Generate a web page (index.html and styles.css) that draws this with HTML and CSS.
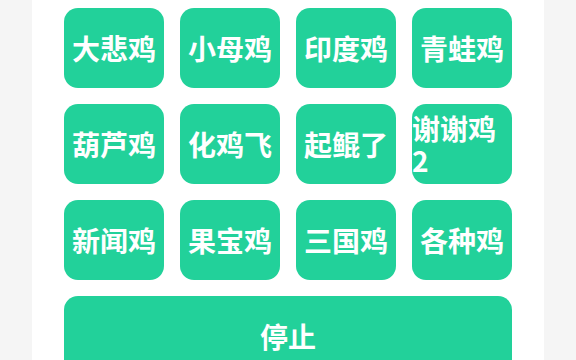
FILE: index.html
```html
<!DOCTYPE html>
<html lang="zh">
<head>
  <meta charset="UTF-8" />
  <meta name="viewport" content="width=device-width, initial-scale=1.0"/>
  <title>鸡</title>
  <link rel="stylesheet" href="styles.css">
</head>
<body>
  <div class="page">
    <div class="grid">
      <div class="btn">大悲鸡</div>
      <div class="btn">小母鸡</div>
      <div class="btn">印度鸡</div>
      <div class="btn">青蛙鸡</div>
      <div class="btn">葫芦鸡</div>
      <div class="btn">化鸡飞</div>
      <div class="btn">起鲲了</div>
      <div class="btn">谢谢鸡2</div>
      <div class="btn">新闻鸡</div>
      <div class="btn">果宝鸡</div>
      <div class="btn">三国鸡</div>
      <div class="btn">各种鸡</div>
    </div>
    <div class="btn stop">停止</div>
  </div>
</body>
</html>
```

FILE: styles.css
```css
* {
  box-sizing: border-box;
}
html, body {
  margin: 0;
  padding: 0;
  height: 100%;
  background: #f5f5f5;
  font-family: "Noto Sans CJK SC", "Noto Sans", sans-serif;
  overflow: hidden;
}
.page {
  width: 512px;
  margin: 0 auto;
  min-height: 100%;
  background: #fff;
  padding: 8px 32px;
}
.grid {
  display: grid;
  grid-template-columns: repeat(4, 100px);
  gap: 16px;
}
.btn {
  height: 80px;
  background: #22d19a;
  color: #fff;
  border-radius: 14px;
  font-size: 28px;
  font-weight: bold;
  line-height: 32px;
  display: flex;
  align-items: center;
  justify-content: center;
}
.stop {
  margin-top: 16px;
}
```
